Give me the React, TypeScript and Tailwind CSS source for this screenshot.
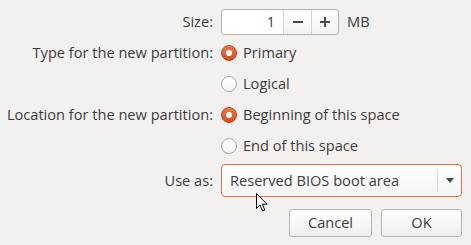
import React from 'react';

const Radio: React.FC<{ checked?: boolean; label: string }> = ({ checked, label }) => (
  <div className="flex items-center h-[26px]">
    {checked ? (
      <span className="w-[16px] h-[16px] rounded-full bg-gradient-to-b from-[#ee7a4d] to-[#d24f1d] border border-[#b9471b] flex items-center justify-center">
        <span className="w-[6px] h-[6px] rounded-full bg-white" />
      </span>
    ) : (
      <span className="w-[16px] h-[16px] rounded-full bg-gradient-to-b from-white to-[#f4f4f4] border border-[#a9a7a3]" />
    )}
    <span className="ml-[6px]">{label}</span>
  </div>
);

const Label: React.FC<{ text: string; h?: string }> = ({ text, h = 'h-[26px]' }) => (
  <div className={`${h} flex items-center justify-end`}>{text}</div>
);

const App: React.FC = () => {
  return (
    <div
      className="relative w-[471px] h-[245px] bg-[#f2f1f0] text-[#3c3c3c] text-[14.6px] overflow-hidden"
      style={{ fontFamily: '"Open Sans", sans-serif' }}
    >
      <div className="pt-[9px] grid grid-cols-[213px_auto] gap-x-[8px] gap-y-[5px]">
        <Label text="Size:" />
        <div className="flex items-center h-[26px]">
          <div className="flex h-[26px] w-[118px] rounded-[3px] border border-[#b5b2ad] overflow-hidden">
            <div className="w-[61px] bg-white flex items-center justify-end pr-[8px]">1</div>
            <div className="w-[28px] border-l border-[#d6d4d1] bg-gradient-to-b from-white to-[#f3f3f3] flex items-center justify-center">
              <span className="w-[10px] h-[2px] bg-[#4a4a4a]" />
            </div>
            <div className="flex-1 border-l border-[#d6d4d1] bg-gradient-to-b from-white to-[#f3f3f3] flex items-center justify-center relative">
              <span className="absolute w-[10px] h-[2px] bg-[#4a4a4a]" />
              <span className="absolute w-[2px] h-[10px] bg-[#4a4a4a]" />
            </div>
          </div>
          <span className="ml-[8px]">MB</span>
        </div>

        <Label text="Type for the new partition:" />
        <Radio checked label="Primary" />
        <div />
        <Radio label="Logical" />

        <Label text="Location for the new partition:" />
        <Radio checked label="Beginning of this space" />
        <div />
        <Radio label="End of this space" />

        <Label text="Use as:" h="h-[33px]" />
        <div className="flex h-[33px] w-[241px] rounded-[4px] border border-[#e0733e] bg-gradient-to-b from-white to-[#f4f4f4] items-center">
          <span className="pl-[8px] flex-1">Reserved BIOS boot area</span>
          <span className="w-px h-[22px] bg-[#d8d6d3]" />
          <span className="w-[23px] flex justify-center">
            <svg width="8" height="5" viewBox="0 0 8 5">
              <path d="M0 0 L8 0 L4 5 Z" fill="#4a4a4a" />
            </svg>
          </span>
        </div>
      </div>

      <div className="flex justify-end gap-[9px] pr-[9px] mt-[12px]">
        <button className="w-[83px] h-[28px] rounded-[3px] border border-[#b8b5b1] bg-gradient-to-b from-white to-[#efefef] text-[#3c3c3c]">
          Cancel
        </button>
        <button className="w-[81px] h-[28px] rounded-[3px] border border-[#b8b5b1] bg-gradient-to-b from-white to-[#efefef] text-[#3c3c3c]">
          OK
        </button>
      </div>

      <svg className="absolute left-[256px] top-[193px]" width="12" height="20" viewBox="0 0 12 20">
        <path d="M0.5 0.5 L0.5 15.5 L4 12 L6.5 18 L8.8 17 L6.4 11.2 L11 11.2 Z" fill="white" stroke="black" strokeWidth="1" strokeLinejoin="round" />
      </svg>
    </div>
  );
};

export default App;
